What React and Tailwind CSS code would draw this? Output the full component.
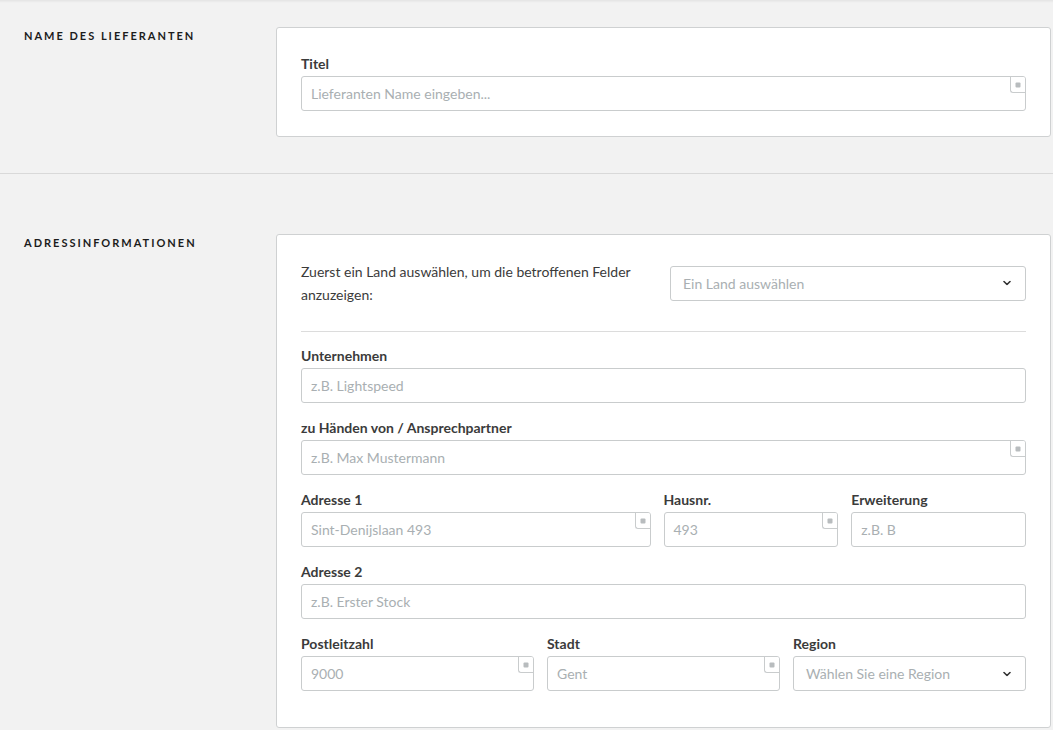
import React from 'react';

const font = { fontFamily: 'Lato, "Open Sans", Arial, sans-serif' };

// kleiner Pflichtfeld-Marker oben rechts im Feld
const Required = () => (
  <span className="absolute right-0 top-0 w-[15px] h-[16px] border-l border-b border-[#c9cccd] rounded-bl-[3px] bg-white flex items-center justify-center">
    <svg width="6" height="6" viewBox="0 0 6 6">
      <rect x="0.5" y="0.5" width="5" height="5" rx="1" fill="#b8bcbe" />
    </svg>
  </span>
);

const Chevron = () => (
  <svg width="8" height="5" viewBox="0 0 8 5" className="absolute right-[14px] top-1/2 -translate-y-1/2">
    <path d="M1 1l3 3 3-3" fill="none" stroke="#333" strokeWidth="1.6" strokeLinecap="round" strokeLinejoin="round" />
  </svg>
);

const Input = ({ placeholder, required }) => (
  <div className="relative h-[35px] border border-[#c9cccd] rounded-[3px] bg-white flex items-center px-[9px] overflow-hidden">
    <span className="text-[14px] text-[#a9afb2]">{placeholder}</span>
    {required && <Required />}
  </div>
);

const Select = ({ placeholder }) => (
  <div className="relative h-[35px] border border-[#c9cccd] rounded-[3px] bg-white flex items-center px-[12px]">
    <span className="text-[14px] text-[#a9afb2]">{placeholder}</span>
    <Chevron />
  </div>
);

const Field = ({ label, children, last }) => (
  <div className={last ? '' : 'mb-[15px]'}>
    <div className="h-[20px] leading-[20px] mb-[2px] text-[14px] font-bold text-[#3b3b3b]">{label}</div>
    {children}
  </div>
);

const SectionLabel = ({ children }) => (
  <div className="w-[276px] shrink-0 pl-[24px] pt-[1px]">
    <h2 className="text-[11px] leading-[16px] font-bold tracking-[2px] text-[#1c1c1c] uppercase">{children}</h2>
  </div>
);

export default function App() {
  return (
    <div className="min-h-screen bg-[#f2f2f2] text-[#3b3b3b]" style={font}>
      {/* Name des Lieferanten */}
      <section className="flex pt-[27px] pb-[36px] pr-[2px] border-b border-[#d9d9d9] shadow-[inset_0_4px_3px_-3px_rgba(0,0,0,0.08)]">
        <SectionLabel>Name des Lieferanten</SectionLabel>
        <div className="flex-1 bg-white border border-[#cfd1d2] rounded-[3px] px-[24px] pt-[26px] pb-[25px]">
          <Field label="Titel" last>
            <Input placeholder="Lieferanten Name eingeben..." required />
          </Field>
        </div>
      </section>

      {/* Adressinformationen */}
      <section className="flex pt-[60px] pr-[2px]">
        <SectionLabel>Adressinformationen</SectionLabel>
        <div className="flex-1 bg-white border border-[#cfd1d2] rounded-[3px] px-[24px] pt-[25px] pb-[36px]">
          <div className="grid grid-cols-2 gap-[13px] items-center">
            <p className="text-[14px] leading-[23px] text-[#3b3b3b]">
              Zuerst ein Land auswählen, um die betroffenen Felder anzuzeigen:
            </p>
            <Select placeholder="Ein Land auswählen" />
          </div>
          <div className="border-t border-[#dcdcdc] mt-[25px] mb-[14px]" />

          <Field label="Unternehmen">
            <Input placeholder="z.B. Lightspeed" />
          </Field>
          <Field label="zu Händen von / Ansprechpartner">
            <Input placeholder="z.B. Max Mustermann" required />
          </Field>

          <div className="grid grid-cols-[2fr_1fr_1fr] gap-x-[13px]">
            <Field label="Adresse 1">
              <Input placeholder="Sint-Denijslaan 493" required />
            </Field>
            <Field label="Hausnr.">
              <Input placeholder="493" required />
            </Field>
            <Field label="Erweiterung">
              <Input placeholder="z.B. B" />
            </Field>
          </div>

          <Field label="Adresse 2">
            <Input placeholder="z.B. Erster Stock" />
          </Field>

          <div className="grid grid-cols-3 gap-x-[13px]">
            <Field label="Postleitzahl" last>
              <Input placeholder="9000" required />
            </Field>
            <Field label="Stadt" last>
              <Input placeholder="Gent" required />
            </Field>
            <Field label="Region" last>
              <Select placeholder="Wählen Sie eine Region" />
            </Field>
          </div>
        </div>
      </section>
    </div>
  );
}
